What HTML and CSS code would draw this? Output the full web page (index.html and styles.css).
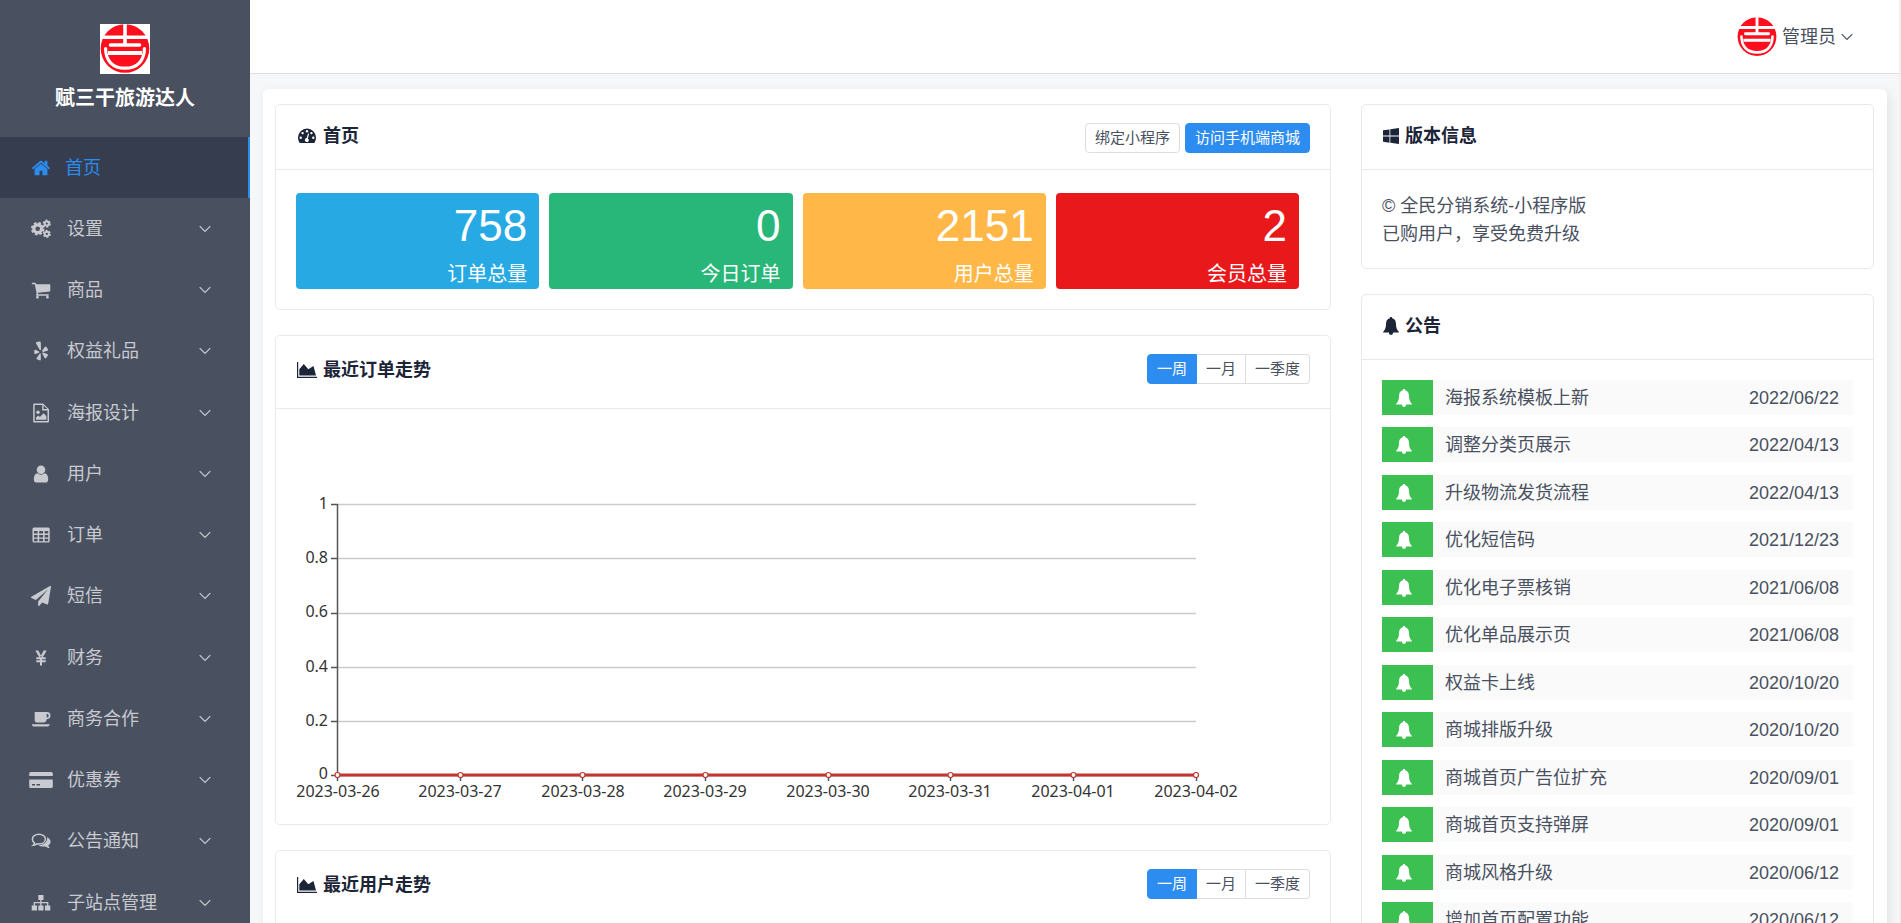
FILE: index.html
```html
<!DOCTYPE html>
<html lang="zh-CN">
<head>
<meta charset="utf-8">
<title>首页</title>
<link rel="stylesheet" href="styles.css">
</head>
<body>
<svg class="sprite" aria-hidden="true">
  <symbol id="logo" viewBox="0 0 50 50">
    <circle cx="25" cy="24.5" r="24.3" fill="#ff0f1e"/>
    <g fill="none" stroke="#fff" stroke-width="3.6">
      <path d="M25 0v20M0 13.2h50"/>
      <path d="M10.5 21h29" stroke-linecap="round"/>
      <path d="M8 29h34" stroke-width="3.8"/>
      <path d="M5.6 24.5C5.600 37 13 44.200 25 44.200S44.400 37 44.400 24.500" stroke-linecap="round" stroke-width="3.2"/>
    </g>
  </symbol>
  <symbol id="chevron" viewBox="0 0 12 12"><path d="M.7 3.200l5.300 5.300 5.300-5.300" fill="none" stroke="currentColor" stroke-width="1.200"/></symbol>
  <symbol id="home" viewBox="0 0 1792 1792"><path d="M1472 992v480q0 26-19 45t-45 19h-384v-384h-256v384h-384q-26 0-45-19t-19-45v-480q0-1 .5-3t.5-3l575-474 575 474q1 2 1 6zm223-69l-62 74q-8 9-21 11h-3q-13 0-21-7l-692-577-692 577q-12 8-24 7-13-2-21-11l-62-74q-8-10-7-23.5t11-21.5l719-599q32-26 76-26t76 26l244 204v-195q0-14 9-23t23-9h192q14 0 23 9t9 23v408l219 182q10 8 11 21.5t-7 23.5z"/></symbol>
  <symbol id="cogs" viewBox="0 0 20 20">
    <g fill="none" stroke="currentColor">
      <circle cx="6.700" cy="9.700" r="3.900" stroke-width="3.200"/><circle cx="6.700" cy="9.700" r="5.800" stroke-width="2" stroke-dasharray="2.600 1.955"/>
      <circle cx="15.800" cy="4.600" r="2.100" stroke-width="1.900"/><circle cx="15.800" cy="4.600" r="3.300" stroke-width="1.500" stroke-dasharray="2 1.456"/>
      <circle cx="15.800" cy="14.900" r="2.100" stroke-width="1.900"/><circle cx="15.800" cy="14.900" r="3.300" stroke-width="1.500" stroke-dasharray="2 1.456"/>
    </g>
  </symbol>
  <symbol id="cart" viewBox="0 0 1792 1792"><path d="M704 1536q0 52-38 90t-90 38-90-38-38-90 38-90 90-38 90 38 38 90zm896 0q0 52-38 90t-90 38-90-38-38-90 38-90 90-38 90 38 38 90zm128-1088v512q0 24-16.5 42.5t-40.5 21.5l-1044 122q13 60 13 70 0 16-24 64h920q26 0 45 19t19 45-19 45-45 19h-1024q-26 0-45-19t-19-45q0-11 8-31.5t16-36 21.5-40 15.5-29.5l-177-823h-204q-26 0-45-19t-19-45 19-45 45-19h256q16 0 28.5 6.5t19.5 15.5 13 24.5 8 26 5.5 29.5 4.5 26h1201q26 0 45 19t19 45z"/></symbol>
  <symbol id="yelp" viewBox="0 0 20 20"><path d="M5 2.200Q4.700 1.500 5.500 1.100L8.500.4Q9.800.3 9.800 1.500L10 8.600Q9.700 9.900 8.800 9zM3.400 9.300Q3.700 8.400 4.600 8.800L8 10.500Q8.800 11.100 8 11.700L4.300 13Q3.300 13.200 3.200 12.200zM9.800 12.900V18.500Q9.700 19.700 8.600 19.300L5.900 18.200Q5 17.700 5.700 16.900L8.600 12.700Q9.500 12 9.800 12.900zM11.300 12.500Q10.900 11.500 12 11.500L16.300 12.900Q17.400 13.500 16.900 14.400L15.100 17Q14.300 17.800 13.600 16.900zM11.100 9.500L14 5.800Q14.700 5.200 15.500 6L17 8.400Q17.300 9.400 16.300 9.800L12.200 10.900Q10.900 10.900 11.100 9.500z"/></symbol>
  <symbol id="poster" viewBox="0 0 20 20"><path fill-rule="evenodd" d="M3.200.5H12L18 6.200V18.500Q18 19.500 17 19.500H3.200Q2.200 19.500 2.200 18.500V1.500Q2.200.5 3.200.5zM3.700 2V18H16.500V7.500H11.200V2zM12.600 2.500V6.100H16.300z"/><circle cx="7" cy="9.200" r="1.800"/><path d="M5 16.800v-2.300l2.200-2 1.700 1.500 3.700-3.700 2.800 3v3.500z"/></symbol>
  <symbol id="user" viewBox="0 0 1792 1792"><path d="M1536 1399q0 109-62.5 187t-150.5 78h-854q-88 0-150.5-78t-62.5-187q0-85 8.5-160.5t31.5-152 58.5-131 94-89 134.5-34.5q131 128 313 128t313-128q76 0 134.5 34.5t94 89 58.5 131 31.5 152 8.5 160.5zm-256-887q0 159-112.5 271.5t-271.5 112.5-271.5-112.5-112.5-271.5 112.5-271.5 271.5-112.500 271.500 112.500 112.500 271.500z"/></symbol>
  <symbol id="table" viewBox="0 0 20 20"><path fill-rule="evenodd" d="M3 2.500H17.200Q18.700 2.500 18.700 4V16Q18.700 17.500 17.200 17.500H3Q1.500 17.500 1.500 16V4Q1.500 2.500 3 2.500zM3 6V8.600H6.600V6zM8.200 6V8.600H12V6zM13.600 6V8.600H17.200V6zM3 9.900V12.400H6.600V9.900zM8.200 9.900V12.400H12V9.900zM13.600 9.900V12.400H17.200V9.900zM3 13.700V16.200H6.600V13.700zM8.200 13.700V16.200H12V13.700zM13.600 13.700V16.200H17.200V13.700z"/></symbol>
  <symbol id="plane" viewBox="0 0 1792 1792"><path d="M1764 11q33 24 27 64l-256 1536q-5 29-32 45-14 8-31 8-11 0-24-5l-453-185-242 295q-18 23-49 23-13 0-22-4-19-7-30.5-23.5t-11.5-36.5v-349l864-1059-1069 925-395-162q-37-14-40-55-2-40 32-59l1664-960q15-9 32-9 20 0 36 11z"/></symbol>
  <symbol id="yen" viewBox="0 0 20 20"><path d="M10 10v7.500M5.300 10.200h9.400M5.300 13.200h9.400" fill="none" stroke="currentColor" stroke-width="2"/><path d="M4.300 2.500h3L10.800 9 9.300 11zM15.700 2.500h-3L9.200 9l1.500 2z"/></symbol>
  <symbol id="coffee" viewBox="0 0 20 20"><path fill-rule="evenodd" d="M3.700 3H16Q19.500 3.200 19.500 6.600T15.700 10.300Q15.200 13.500 12.500 13.500H6.200Q3.700 13.500 3.700 11zM15.700 4.800V8.600Q17.700 8.600 17.700 6.700T15.700 4.800zM.8 15.200H18.800Q18.500 17.500 16.500 17.500H3Q1 17.500.8 15.200z"/></symbol>
  <symbol id="card" viewBox="0 0 24 20"><path fill-rule="evenodd" d="M1.800 2H22.200Q23.800 2 23.800 3.600V6H.2V3.600Q.2 2 1.800 2zM.2 9.500H23.800V16.400Q23.800 18 22.200 18H1.800Q.2 18 .2 16.400zM3 14V15.500H6V14zM7.500 14V15.500H11V14z"/></symbol>
  <symbol id="comments" viewBox="0 0 20 20"><path d="M7.900 3.300C11.500 3.300 14.400 5.400 14.400 8.200S11.500 13 7.900 13Q6.900 13 6 12.800 4.500 13.900 2.300 14.200 3.400 13.200 3.500 11.900C2.200 11 1.400 9.700 1.400 8.200 1.400 5.400 4.300 3.300 7.900 3.300z" fill="none" stroke="currentColor" stroke-width="1.500"/><path d="M16 6.300C18.200 7.300 19.600 8.900 19.600 10.700 19.600 12.200 18.700 13.500 17.300 14.300 17.400 15.500 18.200 16.300 19 17 17 17 15.300 16.300 14.100 15.500 11.300 15.900 9 15.300 7.300 14.200 12.500 14.400 16.800 11.200 16 6.300z"/></symbol>
  <symbol id="sitemap" viewBox="0 0 20 20"><path d="M7.300 2h5.200v5H7.300zM.7 12.500H6v5H.7zM7.300 12.500h5.200v5H7.300zM14 12.500h5.300v5H14z"/><path d="M9.900 6v7M3.300 13V9.700h13.400V13" fill="none" stroke="currentColor" stroke-width="1.300"/></symbol>
  <symbol id="gauge" viewBox="0 0 18 16"><path d="M0 9.500a9 9 0 0 1 18 0c0 1.800-.5 3.500-1.400 5q-.3.500-.9.500H2.300q-.6 0-.9-.5C.5 13 0 11.300 0 9.500z"/><g fill="#fff"><circle cx="2.700" cy="9.700" r="1.200"/><circle cx="4.600" cy="5.100" r="1.200"/><circle cx="9" cy="3.300" r="1.200"/><circle cx="13.400" cy="5.100" r="1.200"/><circle cx="15.300" cy="9.700" r="1.200"/><path d="M10 5.500l1.100.3-1.200 4.600a2 2 0 1 1-1.200-.3z"/></g></symbol>
  <symbol id="area" viewBox="0 0 20 16"><path d="M0 0h1.200v14.800H20V16H0zM2.300 13.500V7.200L6.800 2l4.500 5.200L16.500 4l2.500 9.500z"/></symbol>
  <symbol id="windows" viewBox="0 0 16 16"><path d="M0 2.300l6.500-.9v6.200H0zM7.300 1.300L16 0v7.600H7.300zM0 8.400h6.500v6.300L0 13.800zM7.300 8.400H16V16l-8.700-1.200z"/></symbol>
  <symbol id="bell" viewBox="0 0 16 18"><path d="M8 0c.8 0 1.200.5 1.200 1.200C11.800 1.800 13 3.900 13 7c0 3.900 1.100 6.200 3 7.900q-.2.600-.8.600H.8q-.6 0-.8-.6C1.900 13.200 3 10.900 3 7c0-3.100 1.200-5.200 3.800-5.800C6.800.5 7.200 0 8 0zM5.800 15.300h4.400a2.200 2.600 0 0 1-4.400 0z"/></symbol>
</svg>

<div class="app">
  <aside class="sidebar">
    <div class="brand">
      <svg class="brand-logo"><use href="#logo"/></svg>
      <h1 class="brand-name">赋三干旅游达人</h1>
    </div>
    <nav class="menu">
      <a class="menu-item active" href="#"><svg class="menu-icon"><use href="#home"/></svg><span class="menu-text">首页</span></a>
      <a class="menu-item" href="#"><svg class="menu-icon"><use href="#cogs"/></svg><span class="menu-text">设置</span><svg class="chevron"><use href="#chevron"/></svg></a>
      <a class="menu-item" href="#"><svg class="menu-icon"><use href="#cart"/></svg><span class="menu-text">商品</span><svg class="chevron"><use href="#chevron"/></svg></a>
      <a class="menu-item" href="#"><svg class="menu-icon"><use href="#yelp"/></svg><span class="menu-text">权益礼品</span><svg class="chevron"><use href="#chevron"/></svg></a>
      <a class="menu-item" href="#"><svg class="menu-icon"><use href="#poster"/></svg><span class="menu-text">海报设计</span><svg class="chevron"><use href="#chevron"/></svg></a>
      <a class="menu-item" href="#"><svg class="menu-icon"><use href="#user"/></svg><span class="menu-text">用户</span><svg class="chevron"><use href="#chevron"/></svg></a>
      <a class="menu-item" href="#"><svg class="menu-icon"><use href="#table"/></svg><span class="menu-text">订单</span><svg class="chevron"><use href="#chevron"/></svg></a>
      <a class="menu-item" href="#"><svg class="menu-icon"><use href="#plane"/></svg><span class="menu-text">短信</span><svg class="chevron"><use href="#chevron"/></svg></a>
      <a class="menu-item" href="#"><svg class="menu-icon"><use href="#yen"/></svg><span class="menu-text">财务</span><svg class="chevron"><use href="#chevron"/></svg></a>
      <a class="menu-item" href="#"><svg class="menu-icon"><use href="#coffee"/></svg><span class="menu-text">商务合作</span><svg class="chevron"><use href="#chevron"/></svg></a>
      <a class="menu-item" href="#"><svg class="menu-icon"><use href="#card"/></svg><span class="menu-text">优惠券</span><svg class="chevron"><use href="#chevron"/></svg></a>
      <a class="menu-item" href="#"><svg class="menu-icon"><use href="#comments"/></svg><span class="menu-text">公告通知</span><svg class="chevron"><use href="#chevron"/></svg></a>
      <a class="menu-item" href="#"><svg class="menu-icon"><use href="#sitemap"/></svg><span class="menu-text">子站点管理</span><svg class="chevron"><use href="#chevron"/></svg></a>
    </nav>
  </aside>

  <div class="page">
    <header class="topbar">
      <button class="account" type="button"><svg class="avatar"><use href="#logo"/></svg><span>管理员</span><svg class="chevron"><use href="#chevron"/></svg></button>
    </header>
    <main class="panel">
      <div class="columns">
        <div class="column">
          <section class="card">
            <div class="card-head">
              <h2 class="card-title"><svg class="title-icon"><use href="#gauge"/></svg>首页</h2>
              <div class="actions">
                <button class="btn" type="button">绑定小程序</button>
                <button class="btn btn-primary" type="button">访问手机端商城</button>
              </div>
            </div>
            <div class="stats">
              <div class="stat stat-blue"><span class="stat-value">758</span><span class="stat-label">订单总量</span></div>
              <div class="stat stat-green"><span class="stat-value">0</span><span class="stat-label">今日订单</span></div>
              <div class="stat stat-amber"><span class="stat-value">2151</span><span class="stat-label">用户总量</span></div>
              <div class="stat stat-red"><span class="stat-value">2</span><span class="stat-label">会员总量</span></div>
            </div>
          </section>

          <section class="card">
            <div class="card-head card-head-tall">
              <h2 class="card-title"><svg class="title-icon"><use href="#area"/></svg>最近订单走势</h2>
              <div class="segments">
                <button class="segment selected" type="button">一周</button><button class="segment" type="button">一月</button><button class="segment" type="button">一季度</button>
              </div>
            </div>
            <svg class="chart" viewBox="0 0 1054 415" role="img" aria-label="最近订单走势">
              <path class="chart-grid" d="M62 95.500H920M62 149.500H920M62 204.500H920M62 258.500H920M62 312.500H920"/>
              <path class="chart-axis" d="M61.500 95V366M55 95.500h7M55 149.500h7M55 204.500h7M55 258.500h7M55 312.500h7M55 366.500H920M61.500 366v6M184.500 366v6M306.500 366v6M429.500 366v6M552.500 366v6M674.500 366v6M797.500 366v6M920.500 366v6"/>
              <path class="chart-line" d="M62 366H920"/>
              <g class="chart-dots">
                <circle cx="61.500" cy="366" r="2.500"/><circle cx="184.500" cy="366" r="2.500"/><circle cx="306.500" cy="366" r="2.500"/><circle cx="429.500" cy="366" r="2.500"/><circle cx="552.500" cy="366" r="2.500"/><circle cx="674.500" cy="366" r="2.500"/><circle cx="797.500" cy="366" r="2.500"/><circle cx="920" cy="366" r="2.500"/>
              </g>
              <g class="chart-y">
                <text x="52" y="100">1</text><text x="52" y="154">0.8</text><text x="52" y="208">0.6</text><text x="52" y="263">0.4</text><text x="52" y="317">0.2</text><text x="52" y="370">0</text>
              </g>
              <g class="chart-x">
                <text x="62" y="388">2023-03-26</text><text x="184" y="388">2023-03-27</text><text x="307" y="388">2023-03-28</text><text x="429" y="388">2023-03-29</text><text x="552" y="388">2023-03-30</text><text x="674" y="388">2023-03-31</text><text x="797" y="388">2023-04-01</text><text x="920" y="388">2023-04-02</text>
              </g>
            </svg>
          </section>

          <section class="card">
            <div class="card-head card-head-tall">
              <h2 class="card-title"><svg class="title-icon"><use href="#area"/></svg>最近用户走势</h2>
              <div class="segments">
                <button class="segment selected" type="button">一周</button><button class="segment" type="button">一月</button><button class="segment" type="button">一季度</button>
              </div>
            </div>
            <div class="chart-space"></div>
          </section>
        </div>

        <div class="column">
          <section class="card">
            <div class="card-head">
              <h2 class="card-title"><svg class="title-icon narrow"><use href="#windows"/></svg>版本信息</h2>
            </div>
            <p class="version">© 全民分销系统-小程序版<br>已购用户，享受免费升级</p>
          </section>

          <section class="card">
            <div class="card-head">
              <h2 class="card-title"><svg class="title-icon narrow"><use href="#bell"/></svg>公告</h2>
            </div>
            <ul class="notices">
              <li class="notice"><span class="notice-mark"><svg><use href="#bell"/></svg></span><a href="#">海报系统模板上新</a><time>2022/06/22</time></li>
              <li class="notice"><span class="notice-mark"><svg><use href="#bell"/></svg></span><a href="#">调整分类页展示</a><time>2022/04/13</time></li>
              <li class="notice"><span class="notice-mark"><svg><use href="#bell"/></svg></span><a href="#">升级物流发货流程</a><time>2022/04/13</time></li>
              <li class="notice"><span class="notice-mark"><svg><use href="#bell"/></svg></span><a href="#">优化短信码</a><time>2021/12/23</time></li>
              <li class="notice"><span class="notice-mark"><svg><use href="#bell"/></svg></span><a href="#">优化电子票核销</a><time>2021/06/08</time></li>
              <li class="notice"><span class="notice-mark"><svg><use href="#bell"/></svg></span><a href="#">优化单品展示页</a><time>2021/06/08</time></li>
              <li class="notice"><span class="notice-mark"><svg><use href="#bell"/></svg></span><a href="#">权益卡上线</a><time>2020/10/20</time></li>
              <li class="notice"><span class="notice-mark"><svg><use href="#bell"/></svg></span><a href="#">商城排版升级</a><time>2020/10/20</time></li>
              <li class="notice"><span class="notice-mark"><svg><use href="#bell"/></svg></span><a href="#">商城首页广告位扩充</a><time>2020/09/01</time></li>
              <li class="notice"><span class="notice-mark"><svg><use href="#bell"/></svg></span><a href="#">商城首页支持弹屏</a><time>2020/09/01</time></li>
              <li class="notice"><span class="notice-mark"><svg><use href="#bell"/></svg></span><a href="#">商城风格升级</a><time>2020/06/12</time></li>
              <li class="notice"><span class="notice-mark"><svg><use href="#bell"/></svg></span><a href="#">增加首页配置功能</a><time>2020/06/12</time></li>
            </ul>
          </section>
        </div>
      </div>
    </main>
  </div>
</div>
</body>
</html>
```

FILE: styles.css
```css
* {
  box-sizing: border-box;
}

body {
  margin: 0;
  color: #495060;
  font-family: "Liberation Sans", "Noto Sans CJK SC", sans-serif;
  font-size: 18px;
  line-height: 28px;
}

h1,
h2,
p,
ul {
  margin: 0;
  padding: 0;
}

a {
  color: inherit;
  text-decoration: none;
}

button {
  font-family: inherit;
  color: inherit;
  cursor: pointer;
}

svg {
  fill: currentColor;
}

.sprite {
  display: none;
}

.app {
  display: flex;
  height: 100vh;
  overflow: hidden;
  background: #f5f7f9;
  border-right: 2px solid #f0f0f0;
}

/* Sidebar */

.sidebar {
  flex: none;
  width: 250px;
  overflow: hidden;
  background: #495060;
}

.brand {
  display: flex;
  flex-direction: column;
  align-items: center;
  gap: 10px;
  padding: 24px 0 25px;
}

.brand-logo {
  width: 50px;
  height: 50px;
  background: #fff;
}

.brand-name {
  color: #fff;
  font-size: 20px;
  line-height: 28px;
  font-weight: 700;
}

.menu-item {
  display: flex;
  align-items: center;
  gap: 14px;
  height: 61px;
  padding: 0 39px 0 29px;
  color: #c8cacf;
}

.menu-item:nth-child(4n) {
  height: 62px;
}

.menu-item.active {
  gap: 12px;
  color: #2d8cf0;
  background: #363d4f;
  border-right: 2px solid #2d8cf0;
}

.menu-icon {
  width: 24px;
  height: 20px;
}

.menu-text {
  flex: 1;
}

.chevron {
  width: 12px;
  height: 12px;
}

/* Top bar */

.page {
  flex: 1;
  min-width: 0;
}

.topbar {
  display: flex;
  justify-content: flex-end;
  height: 74px;
  padding-right: 46px;
  background: #fff;
  border-bottom: 1px solid #dddee1;
}

.account {
  display: flex;
  align-items: center;
  gap: 5px;
  padding: 0;
  font-size: 18px;
  line-height: 28px;
  background: none;
  border: 0;
}

.avatar {
  width: 40px;
  height: 40px;
  border-radius: 50%;
}

/* Content */

.panel {
  margin: 15px 12px 0 13px;
  padding: 15px 13px 15px 12px;
  background: #fff;
  border-radius: 6px;
  box-shadow: 3px 3px 12px rgba(0, 0, 0, 0.08);
}

.columns {
  display: grid;
  grid-template-columns: 2fr 1fr;
  margin: 0 -15px;
}

.column {
  display: flex;
  flex-direction: column;
  gap: 25px;
  min-width: 0;
  padding: 0 15px;
}

.card {
  border: 1px solid #e9eaec;
  border-radius: 5px;
}

.card-head {
  display: flex;
  justify-content: space-between;
  align-items: flex-start;
  min-height: 65px;
  padding: 18px 20px 16px 21px;
  border-bottom: 1px solid #e9eaec;
}

.card-head-tall {
  padding-bottom: 22px;
}

.card-title {
  display: flex;
  align-items: center;
  gap: 6px;
  color: #1c2438;
  font-size: 18px;
  line-height: 26px;
  font-weight: 700;
}

.card-head-tall .card-title {
  line-height: 32px;
}

.title-icon {
  width: 20px;
  height: 16px;
}

.title-icon.narrow {
  width: 16px;
  height: 18px;
}

.actions {
  display: flex;
  gap: 5px;
}

.btn,
.segment {
  height: 30px;
  padding: 0 9px;
  font-size: 15px;
  line-height: 26px;
  background: #fff;
  border: 1px solid #dddee1;
  border-radius: 4px;
}

.btn-primary {
  color: #fff;
  background: #2d8cf0;
  border-color: #2d8cf0;
}

.segments {
  display: flex;
}

.segment {
  border-left-width: 0;
  border-radius: 0;
}

.segment:first-child {
  border-left-width: 1px;
  border-radius: 4px 0 0 4px;
}

.segment:last-child {
  border-radius: 0 4px 4px 0;
}

.segment.selected {
  color: #fff;
  background: #2d8cf0;
  border-color: #2d8cf0;
}

.stats {
  display: grid;
  grid-template-columns: repeat(4, 1fr);
  gap: 10px;
  padding: 23px 31px 20px 20px;
}

.stat {
  display: flex;
  flex-direction: column;
  align-items: flex-end;
  height: 96px;
  padding: 8px 12px 0;
  color: #fff;
  border-radius: 4px;
}

.stat-value {
  font-size: 44px;
  line-height: 50px;
}

.stat-label {
  font-size: 20px;
  line-height: 46px;
}

.stat-blue {
  background: #27a9e3;
}

.stat-green {
  background: #28b779;
}

.stat-amber {
  background: #ffb748;
}

.stat-red {
  background: #e9181b;
}

/* Chart */

.chart {
  display: block;
  width: 100%;
  height: auto;
  font-family: "Noto Sans", sans-serif;
  font-size: 16px;
  fill: #333;
}

.chart-space {
  min-height: 415px;
}

.chart-grid {
  stroke: #ccc;
  stroke-width: 1.5;
}

.chart-axis {
  fill: none;
  stroke: #555;
  stroke-width: 1.5;
}

.chart-line {
  stroke: #c23531;
  stroke-width: 3;
}

.chart-dots {
  fill: #fff;
  stroke: #c23531;
  stroke-width: 1.2;
}

.chart-y {
  text-anchor: end;
}

.chart-x {
  text-anchor: middle;
}

/* Side cards */

.version {
  padding: 22px 20px 20px;
}

.notices {
  padding: 20px 20px 8px;
  list-style: none;
}

.notice {
  display: flex;
  align-items: center;
  height: 35px;
  margin-bottom: 12px;
  padding-right: 14px;
  background: #fafafa;
}

.notice:nth-child(even) {
  margin-bottom: 13px;
}

.notice-mark {
  display: flex;
  align-items: center;
  width: 51px;
  height: 35px;
  padding-left: 13px;
  color: #fff;
  background: #3cc051;
}

.notice-mark svg {
  width: 18px;
  height: 18px;
}

.notice a {
  flex: 1;
  padding-left: 12px;
}
```
